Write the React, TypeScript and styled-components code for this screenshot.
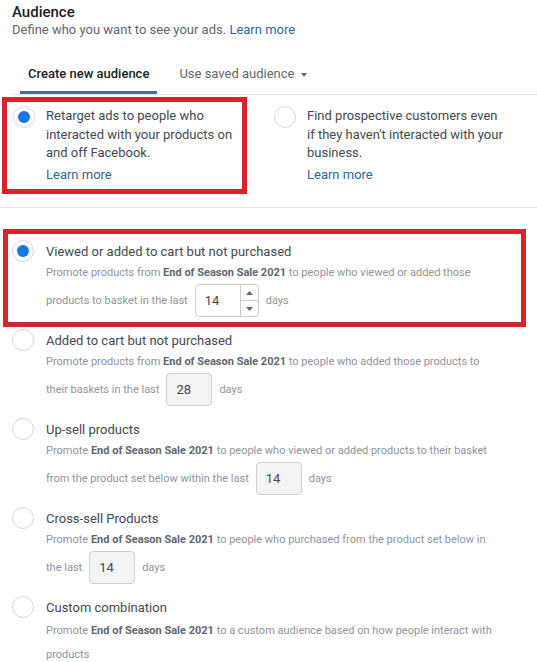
import React from 'react';
import styled, { createGlobalStyle } from 'styled-components';

const GlobalStyle = createGlobalStyle`
  html, body {
    margin: 0;
    padding: 0;
    background: #fff;
  }
  body {
    font-family: Roboto, 'Noto Sans', Arial, sans-serif;
    color: #1c1e21;
  }
`;

const Page = styled.div`
  width: 537px;
  height: 662px;
  overflow: hidden;
  background: #fff;
`;

const Header = styled.div`
  padding: 3px 0 0 12px;
`;

const Title = styled.h2`
  margin: 0;
  font-size: 15px;
  line-height: 18px;
  font-weight: 500;
  color: #1c1e21;
`;

const Subtitle = styled.p`
  margin: 0;
  font-size: 13px;
  line-height: 18px;
  color: #606770;
`;

const Link = styled.a`
  color: #2d67a3;
  text-decoration: none;
  cursor: pointer;
`;

const Tabs = styled.div`
  display: flex;
  gap: 14px;
  margin: 26px 0 0 12px;
  padding-left: 8px;
  border-bottom: 1px solid #e4e6eb;
`;

const Tab = styled.div<{ $active?: boolean }>`
  display: flex;
  align-items: center;
  gap: 7px;
  padding: 0 8px 8px;
  font-size: 13px;
  line-height: 18px;
  font-weight: ${p => (p.$active ? 500 : 400)};
  color: ${p => (p.$active ? '#1c1e21' : '#606770')};
  border-bottom: 3px solid ${p => (p.$active ? '#4b6aa0' : 'transparent')};
  cursor: pointer;
`;

const Caret = styled.span`
  width: 0;
  height: 0;
  border-left: 3.5px solid transparent;
  border-right: 3.5px solid transparent;
  border-top: 4px solid #606770;
  margin-top: 1px;
`;

const ChoiceRow = styled.div`
  display: flex;
  gap: 28px;
  padding: 11px 0 23px 13px;
  border-bottom: 1px solid #e4e6eb;
`;

// red annotation frame drawn over the highlighted part
const Framed = styled.div<{ $frame?: string }>`
  position: relative;
  &::after {
    content: ${p => (p.$frame ? "''" : 'none')};
    position: absolute;
    inset: ${p => p.$frame || '0'};
    border: 5px solid #d8232a;
    pointer-events: none;
  }
`;

const Choice = styled(Framed)`
  display: flex;
  gap: 11px;
  width: 233px;
`;

const Radio = styled.span<{ $checked?: boolean }>`
  flex: none;
  width: 22px;
  height: 22px;
  box-sizing: border-box;
  border-radius: 50%;
  border: 1px solid #d6d9dd;
  background: #fff;
  display: flex;
  align-items: center;
  justify-content: center;
  &::before {
    content: '';
    width: 12px;
    height: 12px;
    border-radius: 50%;
    background: ${p => (p.$checked ? '#1b74e4' : 'transparent')};
  }
`;

const ChoiceText = styled.div`
  width: 200px;
  margin-top: 1px;
  font-size: 13px;
  line-height: 18.5px;
  color: #444950;
`;

const ChoiceLink = styled(Link)`
  display: block;
  margin-top: 3px;
`;

const List = styled.div`
  display: flex;
  flex-direction: column;
  gap: 12px;
  padding: 32px 0 0 12px;
`;

const Item = styled(Framed)``;

const ItemHead = styled.div`
  display: flex;
  align-items: center;
  gap: 12px;
  height: 22px;
`;

const ItemTitle = styled.div`
  font-size: 13px;
  color: #444950;
`;

const Desc = styled.div<{ $tall?: boolean }>`
  padding-left: 34px;
  font-size: 11px;
  line-height: ${p => (p.$tall ? '24px' : '22px')};
  margin-top: ${p => (p.$tall ? '1px' : '0')};
  color: #90949c;
  b {
    font-weight: 700;
    color: #606770;
  }
`;

const InputRow = styled.div`
  display: flex;
  align-items: center;
  gap: 7px;
  height: 33px;
`;

const NumberBox = styled.div<{ $disabled?: boolean; $width: number }>`
  display: flex;
  width: ${p => p.$width}px;
  height: 33px;
  box-sizing: border-box;
  border: 1px solid #ccd0d5;
  border-radius: 4px;
  background: ${p => (p.$disabled ? '#f2f3f5' : '#fff')};
  overflow: hidden;
`;

const NumberValue = styled.span`
  flex: 1;
  display: flex;
  align-items: center;
  padding-left: 9px;
  font-size: 13px;
  color: #444950;
`;

const Stepper = styled.div`
  width: 17px;
  display: flex;
  flex-direction: column;
  border-left: 1px solid #ccd0d5;
`;

const StepButton = styled.div<{ $down?: boolean }>`
  flex: 1;
  display: flex;
  align-items: center;
  justify-content: center;
  border-top: ${p => (p.$down ? '1px solid #ccd0d5' : 'none')};
`;

const Arrow = ({ down }: { down?: boolean }) => (
  <svg width="7" height="4" viewBox="0 0 7 4">
    <path d={down ? 'M0 0 L7 0 L3.5 4 Z' : 'M0 4 L7 4 L3.5 0 Z'} fill="#606770" />
  </svg>
);

const DaysInput = ({ value, stepper, width }: { value: number; stepper?: boolean; width: number }) => (
  <NumberBox $disabled={!stepper} $width={width}>
    <NumberValue>{value}</NumberValue>
    {stepper && (
      <Stepper>
        <StepButton><Arrow /></StepButton>
        <StepButton $down><Arrow down /></StepButton>
      </Stepper>
    )}
  </NumberBox>
);

const Sale = () => <b>End of Season Sale 2021</b>;

interface Option {
  title: string;
  line1: React.ReactNode;
  line2: React.ReactNode;
  days?: number;
  stepper?: boolean;
  checked?: boolean;
}

const options: Option[] = [
  {
    title: 'Viewed or added to cart but not purchased',
    line1: <>Promote products from <Sale /> to people who viewed or added those</>,
    line2: 'products to basket in the last',
    days: 14,
    stepper: true,
    checked: true,
  },
  {
    title: 'Added to cart but not purchased',
    line1: <>Promote products from <Sale /> to people who added those products to</>,
    line2: 'their baskets in the last',
    days: 28,
  },
  {
    title: 'Up-sell products',
    line1: <>Promote <Sale /> to people who viewed or added products to their basket</>,
    line2: 'from the product set below within the last',
    days: 14,
  },
  {
    title: 'Cross-sell Products',
    line1: <>Promote <Sale /> to people who purchased from the product set below in</>,
    line2: 'the last',
    days: 14,
  },
  {
    title: 'Custom combination',
    line1: <>Promote <Sale /> to a custom audience based on how people interact with</>,
    line2: 'products',
  },
];

export default function App() {
  return (
    <Page>
      <GlobalStyle />
      <Header>
        <Title>Audience</Title>
        <Subtitle>
          Define who you want to see your ads. <Link>Learn more</Link>
        </Subtitle>
      </Header>

      <Tabs>
        <Tab $active>Create new audience</Tab>
        <Tab>
          Use saved audience <Caret />
        </Tab>
      </Tabs>

      <ChoiceRow>
        <Choice $frame="-9px -1px -10px -11px">
          <Radio $checked />
          <ChoiceText>
            Retarget ads to people who interacted with your products on and off Facebook.
            <ChoiceLink>Learn more</ChoiceLink>
          </ChoiceText>
        </Choice>
        <Choice>
          <Radio />
          <ChoiceText>
            Find prospective customers even if they haven't interacted with your business.
            <ChoiceLink>Learn more</ChoiceLink>
          </ChoiceText>
        </Choice>
      </ChoiceRow>

      <List>
        {options.map((o, i) => (
          <Item key={o.title} $frame={i === 0 ? '-11px 11px -10px -9px' : undefined}>
            <ItemHead>
              <Radio $checked={o.checked} />
              <ItemTitle>{o.title}</ItemTitle>
            </ItemHead>
            <Desc $tall={o.days === undefined}>
              <div>{o.line1}</div>
              {o.days !== undefined ? (
                <InputRow>
                  <span>{o.line2}</span>
                  <DaysInput value={o.days} stepper={o.stepper} width={o.stepper ? 64 : 46} />
                  <span>days</span>
                </InputRow>
              ) : (
                <div>{o.line2}</div>
              )}
            </Desc>
          </Item>
        ))}
      </List>
    </Page>
  );
}
